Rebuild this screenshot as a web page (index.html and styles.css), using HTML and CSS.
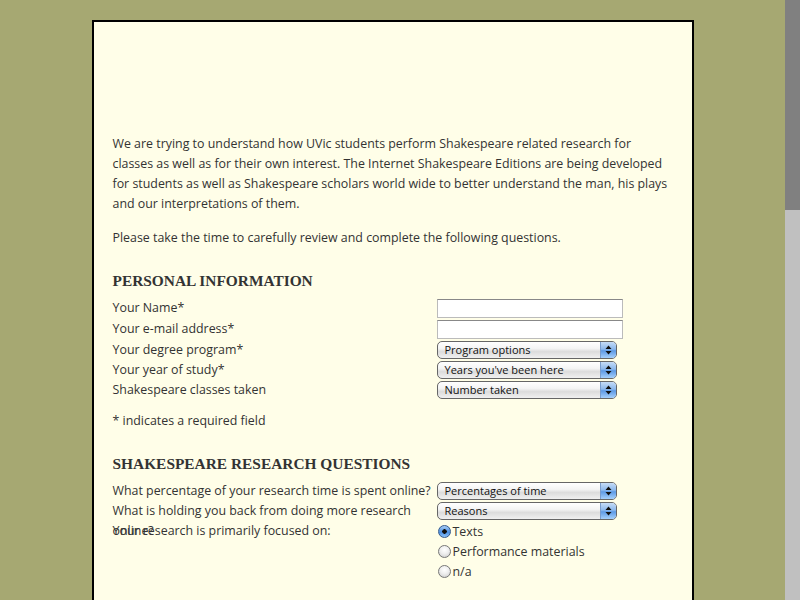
FILE: index.html
```html
<!DOCTYPE html>
<html>
<head>
<meta charset="utf-8">
<title>Shakespeare Research Survey</title>
<link rel="stylesheet" href="styles.css">
</head>
<body>
<div class="page">
  <div class="content">
    <p class="intro">We are trying to understand how UVic students perform Shakespeare related research for classes as well as for their own interest. The Internet Shakespeare Editions are being developed for students as well as Shakespeare scholars world wide to better understand the man, his plays and our interpretations of them.</p>
    <p class="intro">Please take the time to carefully review and complete the following questions.</p>

    <h2 class="section">PERSONAL INFORMATION</h2>
    <div class="form">
      <div class="row row-input"><span class="label">Your Name*</span><span class="text-input"></span></div>
      <div class="row row-input"><span class="label">Your e-mail address*</span><span class="text-input"></span></div>
      <div class="row"><span class="label">Your degree program*</span><div class="select"><span class="sel-text">Program options</span><span class="sel-btn"><svg width="7" height="10" viewBox="0 0 7 10"><path d="M3.5 0.5 L6.5 4 L0.5 4 Z M0.5 6 L6.5 6 L3.5 9.5 Z" fill="#111"/></svg></span></div></div>
      <div class="row"><span class="label">Your year of study*</span><div class="select"><span class="sel-text">Years you've been here</span><span class="sel-btn"><svg width="7" height="10" viewBox="0 0 7 10"><path d="M3.5 0.5 L6.5 4 L0.5 4 Z M0.5 6 L6.5 6 L3.5 9.5 Z" fill="#111"/></svg></span></div></div>
      <div class="row"><span class="label">Shakespeare classes taken</span><div class="select"><span class="sel-text">Number taken</span><span class="sel-btn"><svg width="7" height="10" viewBox="0 0 7 10"><path d="M3.5 0.5 L6.5 4 L0.5 4 Z M0.5 6 L6.5 6 L3.5 9.5 Z" fill="#111"/></svg></span></div></div>
    </div>
    <p class="note">* indicates a required field</p>

    <h2 class="section">SHAKESPEARE RESEARCH QUESTIONS</h2>
    <div class="form">
      <div class="row"><span class="label">What percentage of your research time is spent online?</span><div class="select"><span class="sel-text">Percentages of time</span><span class="sel-btn"><svg width="7" height="10" viewBox="0 0 7 10"><path d="M3.5 0.5 L6.5 4 L0.5 4 Z M0.5 6 L6.5 6 L3.5 9.5 Z" fill="#111"/></svg></span></div></div>
      <div class="row"><span class="label">What is holding you back from doing more research online?</span><div class="select"><span class="sel-text">Reasons</span><span class="sel-btn"><svg width="7" height="10" viewBox="0 0 7 10"><path d="M3.5 0.5 L6.5 4 L0.5 4 Z M0.5 6 L6.5 6 L3.5 9.5 Z" fill="#111"/></svg></span></div></div>
      <div class="row row-radio"><span class="label">Your research is primarily focused on:</span>
        <div class="radios">
          <div class="radio-item"><span class="radio checked"></span>Texts</div>
          <div class="radio-item"><span class="radio"></span>Performance materials</div>
          <div class="radio-item"><span class="radio"></span>n/a</div>
        </div>
      </div>
    </div>
    <div class="spacer"></div>
  </div>
</div>
<div class="scrollbar"><div class="scroll-thumb"></div></div>
</body>
</html>
```

FILE: styles.css
```css
html {
  background: #a6a872;
}
body {
  margin: 0 15px 0 0;
  background: #a6a872;
  font-family: "Open Sans", "DejaVu Sans", sans-serif;
  color: #333;
}
.page {
  width: 598px;
  margin: 20px auto 0;
  border: 2px solid #000;
  background: #fffee8;
}
.content {
  padding: 112px 18px 0 19px;
}
.intro {
  margin: 0 0 14px;
  font-size: 12.4px;
  line-height: 20px;
}
.section {
  margin: 24px 0 8px;
  font-family: "Liberation Serif", "DejaVu Serif", serif;
  font-size: 15.4px;
  line-height: 18px;
  font-weight: bold;
  color: #333;
}
.form {
  display: flex;
  flex-direction: column;
}
.row {
  display: flex;
  align-items: center;
  height: 20px;
  font-size: 12.4px;
}
.row-input {
  height: 21px;
}
.label {
  width: 324px;
  flex: none;
  line-height: 20px;
  align-self: flex-start;
  height: 20px;
}
.text-input {
  width: 184px;
  height: 17px;
  border: 1px solid #bbb;
  border-top-color: #888;
  background: #fff;
}
.select {
  display: flex;
  width: 178px;
  height: 16px;
  border: 1px solid #666;
  border-radius: 5px;
  background: linear-gradient(#fff 0%, #f4f4f4 40%, #dcdcdc 60%, #f0f0f0 100%);
  overflow: hidden;
  font-size: 11px;
  color: #111;
}
.sel-text {
  flex: 1;
  padding-left: 7px;
  line-height: 16px;
}
.sel-btn {
  width: 15px;
  display: flex;
  align-items: center;
  justify-content: center;
  background: linear-gradient(#c6dcf6 0%, #8cb8ec 45%, #5d9ae6 55%, #a6d0fb 100%);
  border-left: 1px solid #7a9ccc;
}
.note {
  margin: 11px 0 0;
  font-size: 12.4px;
  line-height: 20px;
}
.row-radio {
  height: auto;
  align-items: flex-start;
}
.radios {
  display: flex;
  flex-direction: column;
  margin-left: 1px;
}
.radio-item {
  display: flex;
  align-items: center;
  height: 20px;
  font-size: 12.4px;
}
.radio {
  width: 11px;
  height: 11px;
  border: 1px solid #777;
  border-radius: 50%;
  background: radial-gradient(circle at 50% 35%, #fff 0%, #eee 45%, #c8c8c8 100%);
  margin-right: 2px;
}
.radio.checked {
  border-color: #345a8e;
  background: radial-gradient(circle at 50% 50%, #111 0 2px, transparent 2.5px), linear-gradient(#a9cdf6, #4a8fe2 55%, #8cc2fa);
}
.spacer {
  height: 40px;
}
.scrollbar {
  position: fixed;
  top: 0;
  right: 0;
  width: 15px;
  height: 100%;
  background: #c0c0c0;
}
.scroll-thumb {
  height: 210px;
  background: #808080;
}
```
